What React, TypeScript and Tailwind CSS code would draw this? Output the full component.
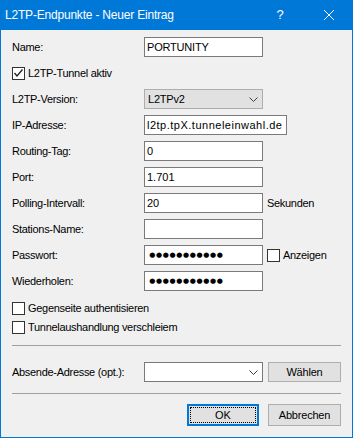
import React from "react";

const font = { fontFamily: '"Liberation Sans", Arial, sans-serif' };

function Chevron() {
  return (
    <svg width="9" height="5" viewBox="0 0 9 5" className="shrink-0">
      <polyline points="0.5,0.5 4.5,4.5 8.5,0.5" fill="none" stroke="#404040" strokeWidth="1" />
    </svg>
  );
}

function Box({ checked = false }: { checked?: boolean }) {
  return (
    <div className="w-[13px] h-[13px] border border-[#333333] bg-white shrink-0 relative">
      {checked && (
        <svg width="11" height="11" viewBox="0 0 11 11" className="absolute left-0 top-0">
          <polyline points="1.5,5 4,8 9.5,1.5" fill="none" stroke="#202020" strokeWidth="1.3" />
        </svg>
      )}
    </div>
  );
}

function Dots() {
  return (
    <div className="flex items-center pl-[2px]">
      {Array.from({ length: 11 }).map((_, i) => (
        <span
          key={i}
          className="inline-block w-[6.75px] text-center text-[7px] leading-none text-black"
          style={{ fontFamily: '"DejaVu Sans", sans-serif' }}
        >
          ●
        </span>
      ))}
    </div>
  );
}

function Label({ children }: { children: React.ReactNode }) {
  return <div className="w-[132px] shrink-0 text-[11px] tracking-[-0.3px] text-black">{children}</div>;
}

function Input({ children, w = "w-[119px]" }: { children?: React.ReactNode; w?: string }) {
  return (
    <div className={`${w} h-[20px] border border-[#7a7a7a] bg-white flex items-center px-[2px] text-[11px] text-black overflow-hidden whitespace-nowrap`}>
      {children}
    </div>
  );
}

function Row({ label, children }: { label: string; children: React.ReactNode }) {
  return (
    <div className="flex items-center h-[20px]">
      <Label>{label}</Label>
      {children}
    </div>
  );
}

export default function App() {
  return (
    <div className="w-[353px] h-[438px] flex flex-col bg-[#0078d7]" style={font}>
      <div className="h-[30px] shrink-0 flex items-center text-white">
        <div className="pl-[5px] text-[12px] tracking-[-0.2px] flex-1">L2TP-Endpunkte - Neuer Eintrag</div>
        <div className="w-[20px] text-[13px] text-center mr-[34px]">?</div>
        <svg width="10" height="10" viewBox="0 0 10 10" className="mr-[19px]">
          <line x1="0" y1="0" x2="10" y2="10" stroke="white" strokeWidth="1" />
          <line x1="10" y1="0" x2="0" y2="10" stroke="white" strokeWidth="1" />
        </svg>
      </div>
      <div className="flex-1 mx-[1px] mb-[1px] bg-[#f0f0f0] pl-[11px] pr-[11px] pt-[7px] flex flex-col">
        <div className="flex flex-col gap-[6px]">
          <Row label="Name:">
            <Input>
              <span className="tracking-[-0.2px]">PORTUNITY</span>
            </Input>
          </Row>
          <div className="flex items-center h-[20px]">
            <Box checked />
            <span className="ml-[3px] text-[11px] tracking-[-0.3px]">L2TP-Tunnel aktiv</span>
          </div>
          <Row label="L2TP-Version:">
            <div className="w-[119px] h-[20px] border border-[#adadad] bg-[#e1e1e1] flex items-center justify-between pl-[3px] pr-[4px] text-[11px]">
              <span className="tracking-[-0.2px]">L2TPv2</span>
              <Chevron />
            </div>
          </Row>
          <Row label="IP-Adresse:">
            <Input w="w-[143px]">
              <span className="tracking-[0.5px]">l2tp.tpX.tunneleinwahl.de</span>
            </Input>
          </Row>
          <Row label="Routing-Tag:">
            <Input>0</Input>
          </Row>
          <Row label="Port:">
            <Input>1.701</Input>
          </Row>
          <Row label="Polling-Intervall:">
            <Input>20</Input>
            <span className="ml-[4px] text-[11px] tracking-[-0.3px]">Sekunden</span>
          </Row>
          <Row label="Stations-Name:">
            <Input />
          </Row>
          <Row label="Passwort:">
            <Input>
              <Dots />
            </Input>
            <div className="ml-[4px] flex items-center">
              <Box />
              <span className="ml-[3px] text-[11px] tracking-[-0.3px]">Anzeigen</span>
            </div>
          </Row>
          <Row label="Wiederholen:">
            <Input>
              <Dots />
            </Input>
          </Row>
        </div>
        <div className="mt-[8px] flex flex-col">
          <div className="flex items-center h-[19px]">
            <Box />
            <span className="ml-[3px] text-[11px] tracking-[-0.3px]">Gegenseite authentisieren</span>
          </div>
          <div className="flex items-center h-[19px]">
            <Box />
            <span className="ml-[3px] text-[11px] tracking-[-0.3px]">Tunnelaushandlung verschleiem</span>
          </div>
        </div>
        <div className="mt-[8px] h-[1px] bg-[#a0a0a0]" />
        <div className="mt-[16px] flex items-center h-[20px]">
          <Label>Absende-Adresse (opt.):</Label>
          <div className="w-[119px] h-[20px] border border-[#7a7a7a] bg-white flex items-center justify-end pr-[4px]">
            <Chevron />
          </div>
          <div className="ml-[5px] w-[73px] h-[20px] border border-[#adadad] bg-[#e1e1e1] flex items-center justify-center text-[11px] tracking-[-0.2px]">
            Wählen
          </div>
        </div>
        <div className="mt-[11px] h-[1px] bg-[#a0a0a0]" />
        <div className="mt-[10px] flex justify-end gap-[9px]">
          <div className="w-[72px] h-[22px] border-2 border-[#0078d7] bg-[#e1e1e1] p-[1px]">
            <div className="w-full h-full border border-dotted border-black flex items-center justify-center text-[11px]">
              OK
            </div>
          </div>
          <div className="w-[73px] h-[22px] border border-[#adadad] bg-[#e1e1e1] flex items-center justify-center text-[11px] tracking-[-0.2px]">
            Abbrechen
          </div>
        </div>
      </div>
    </div>
  );
}
